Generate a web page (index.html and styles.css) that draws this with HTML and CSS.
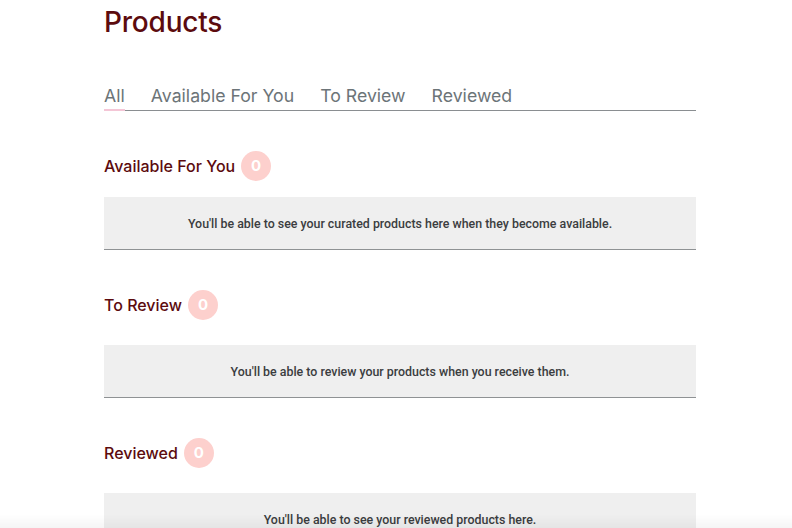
FILE: index.html
```html
<!DOCTYPE html>
<html>
<head>
<meta charset="utf-8">
<link rel="stylesheet" href="styles.css">
</head>
<body>
<main class="page">
  <h1 class="title">Products</h1>
  <nav class="tabs">
    <span class="tab active">All</span>
    <span class="tab">Available For You</span>
    <span class="tab">To Review</span>
    <span class="tab">Reviewed</span>
  </nav>

  <section class="section first">
    <h2 class="section-head">Available For You <span class="badge">0</span></h2>
    <div class="empty">You'll be able to see your curated products here when they become available.</div>
  </section>

  <section class="section">
    <h2 class="section-head">To Review <span class="badge">0</span></h2>
    <div class="empty">You'll be able to review your products when you receive them.</div>
  </section>

  <section class="section">
    <h2 class="section-head">Reviewed <span class="badge">0</span></h2>
    <div class="empty">You'll be able to see your reviewed products here.</div>
  </section>
</main>
<div class="bottom-shade"></div>
</body>
</html>
```
FILE: styles.css
```css
html, body {
  margin: 0;
  padding: 0;
  background: #ffffff;
  font-family: "Inter", "Liberation Sans", sans-serif;
}

.page {
  width: 592px;
  margin-left: 104px;
  padding-top: 4px;
}

.title {
  margin: 0;
  font-size: 28px;
  line-height: 36px;
  font-weight: 500;
  color: #5c0b0e;
  letter-spacing: -0.2px;
}

.tabs {
  display: flex;
  gap: 26px;
  margin-top: 45px;
  border-bottom: 1px solid #8a8e91;
}

.tab {
  font-size: 17.7px;
  line-height: 22px;
  padding-bottom: 2px;
  color: #6c7478;
  margin-bottom: -1px;
  border-bottom: 2px solid transparent;
}

.tab.active {
  border-bottom-color: #f4c6d6;
}

.section {
  margin-top: 40px;
}

.section.first {
  margin-top: 40px;
}

.section-head {
  display: flex;
  align-items: center;
  gap: 6px;
  margin: 0;
  font-size: 16px;
  line-height: 30px;
  font-weight: 500;
  color: #5c0b0e;
}

.badge {
  width: 30px;
  height: 30px;
  border-radius: 50%;
  background: #fdd0cd;
  color: #ffffff;
  font-size: 15px;
  font-weight: 700;
  display: flex;
  align-items: center;
  justify-content: center;
}

.empty {
  margin-top: 25px;
  height: 52px;
  background: #efefef;
  border-bottom: 1px solid #8f9294;
  display: flex;
  align-items: center;
  justify-content: center;
  font-family: "Roboto", "Liberation Sans", sans-serif;
  font-size: 12.4px;
  font-weight: 500;
  color: #3b3d40;
}

.first .empty {
  margin-top: 16px;
}

.bottom-shade {
  position: fixed;
  left: 0;
  right: 0;
  bottom: 0;
  height: 14px;
  background: linear-gradient(to bottom, rgba(0,0,0,0), rgba(0,0,0,0.04));
  pointer-events: none;
}
```
